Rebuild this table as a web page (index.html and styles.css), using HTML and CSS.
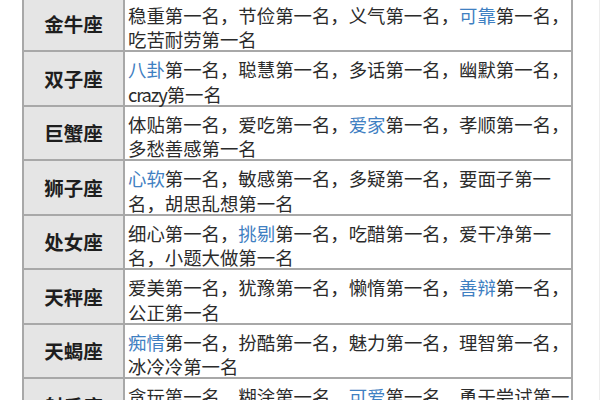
FILE: index.html
```html
<!DOCTYPE html>
<html lang="zh-CN">
<head>
<meta charset="utf-8">
<title>星座第一名</title>
<link rel="stylesheet" href="styles.css">
</head>
<body>
<div class="page">
  <div class="table">
    <div class="row">
      <div class="sign">金牛座</div>
      <div class="desc">稳重第一名，节俭第一名，义气第一名，<span class="hl">可靠</span>第一名，吃苦耐劳第一名</div>
    </div>
    <div class="row">
      <div class="sign">双子座</div>
      <div class="desc"><span class="hl">八卦</span>第一名，聪慧第一名，多话第一名，幽默第一名，<span class="latin">crazy</span>第一名</div>
    </div>
    <div class="row">
      <div class="sign">巨蟹座</div>
      <div class="desc">体贴第一名，爱吃第一名，<span class="hl">爱家</span>第一名，孝顺第一名，多愁善感第一名</div>
    </div>
    <div class="row">
      <div class="sign">狮子座</div>
      <div class="desc"><span class="hl">心软</span>第一名，敏感第一名，多疑第一名，要面子第一名，胡思乱想第一名</div>
    </div>
    <div class="row">
      <div class="sign">处女座</div>
      <div class="desc">细心第一名，<span class="hl">挑剔</span>第一名，吃醋第一名，爱干净第一名，小题大做第一名</div>
    </div>
    <div class="row">
      <div class="sign">天秤座</div>
      <div class="desc">爱美第一名，犹豫第一名，懒惰第一名，<span class="hl">善辩</span>第一名，公正第一名</div>
    </div>
    <div class="row">
      <div class="sign">天蝎座</div>
      <div class="desc"><span class="hl">痴情</span>第一名，扮酷第一名，魅力第一名，理智第一名，冰冷冷第一名</div>
    </div>
    <div class="row">
      <div class="sign">射手座</div>
      <div class="desc">贪玩第一名，糊涂第一名，<span class="hl">可爱</span>第一名，勇于尝试第一名，自由第一名</div>
    </div>
  </div>
</div>
</body>
</html>
```

FILE: styles.css
```css
html, body {
  margin: 0;
  padding: 0;
  background: #ffffff;
}

body {
  width: 600px;
  height: 400px;
  box-sizing: border-box;
  border-right: 1px solid #ededed;
  overflow: hidden;
  font-family: "Noto Sans CJK SC", "Noto Sans", sans-serif;
  color: #2b2b2b;
}

.page {
  padding-left: 22px;
  margin-top: -4.5px;
}

.table {
  width: 551px;
  box-sizing: border-box;
  border-left: 2px solid #a8a8a8;
  border-right: 2px solid #a8a8a8;
}

.row {
  display: flex;
  height: 54.5px;
  box-sizing: border-box;
  border-top: 2px solid #a8a8a8;
}

.sign {
  width: 99px;
  flex: none;
  display: flex;
  align-items: center;
  justify-content: center;
  background: #e5e5e5;
  border-right: 2px solid #a8a8a8;
  font-size: 19.5px;
  font-weight: 700;
  color: #1e1e1e;
}

.desc {
  flex: 1;
  min-width: 0;
  padding: 5px 0 0 3px;
  font-size: 18.4px;
  line-height: 24.5px;
  background: #ffffff;
}

.hl {
  color: #3f80c2;
}

.latin {
  letter-spacing: -1.2px;
}
```
